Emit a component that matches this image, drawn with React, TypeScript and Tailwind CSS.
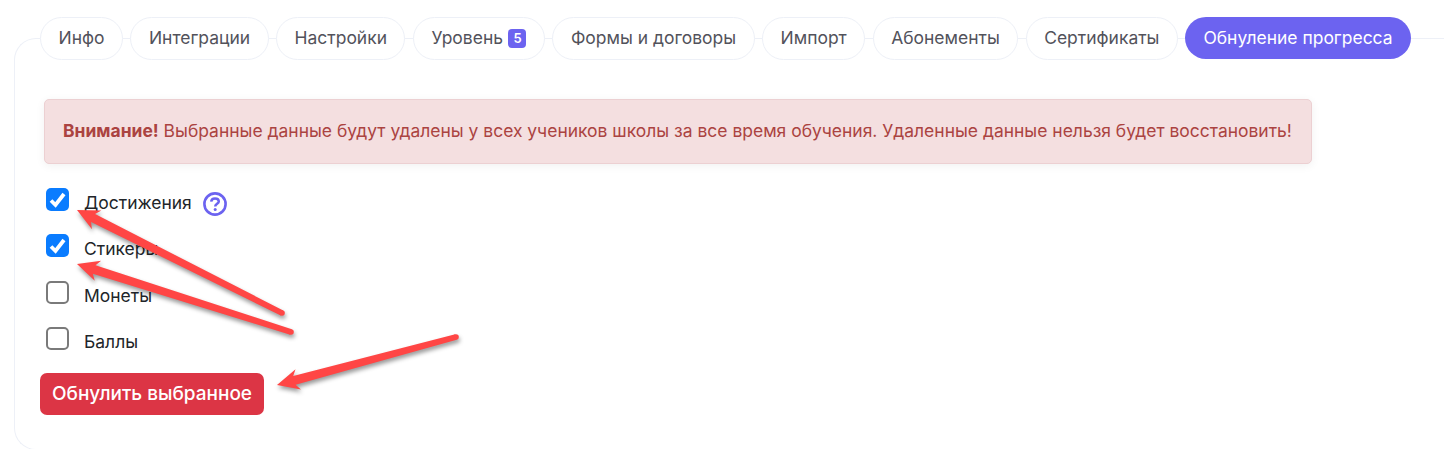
const tabs = ["Инфо", "Интеграции", "Настройки", "Уровень", "Формы и договоры", "Импорт", "Абонементы", "Сертификаты"];
const checks = [
  { label: "Достижения", checked: true, help: true },
  { label: "Стикеры", checked: true },
  { label: "Монеты", checked: false },
  { label: "Баллы", checked: false },
];
const arrows = [
  { x1: 282, y1: 313, x2: 77, y2: 210 },
  { x1: 291, y1: 332, x2: 77, y2: 264 },
  { x1: 456, y1: 337, x2: 277, y2: 385 },
];

function Arrow({ x1, y1, x2, y2 }: { x1: number; y1: number; x2: number; y2: number }) {
  const a = Math.atan2(y1 - y2, x1 - x2);
  const len = Math.hypot(x1 - x2, y1 - y2);
  const p = (d: number, o: number) => {
    const x = x2 + Math.cos(a) * d - Math.sin(a) * o;
    const y = y2 + Math.sin(a) * d + Math.cos(a) * o;
    return `${x},${y}`;
  };
  return (
    <g fill="#ff4645">
      <polygon
        points={`${p(0, 0)} ${p(22, 10.5)} ${p(18, 4.5)} ${p(len, 2.8)} ${p(len, -2.8)} ${p(18, -4.5)} ${p(22, -10.5)}`}
      />
      <circle cx={x1} cy={y1} r="2.8" />
    </g>
  );
}

function Check({ checked }: { checked: boolean }) {
  return checked ? (
    <span className="flex h-[23px] w-[23px] shrink-0 items-center justify-center rounded-[5px] bg-[#0a7cff]">
      <svg viewBox="0 0 23 23" className="h-[23px] w-[23px]">
        <path d="M5 12.5 L9.5 17 L18 6" fill="none" stroke="#fff" strokeWidth="3.8" />
      </svg>
    </span>
  ) : (
    <span className="h-[23px] w-[23px] shrink-0 rounded-[5px] border-2 border-[#7a7a7a] bg-white" />
  );
}

export default function App() {
  return (
    <div className="relative h-[449px] w-[1444px] overflow-hidden bg-white font-['Inter',sans-serif] pt-[38px] pl-[14px]">
      <div className="h-[412px] rounded-l-[22px] border-y border-l border-[#edf0f7] pl-[25px]">
        <div className="-mt-[22px] flex items-start gap-[7.4px]">
          {tabs.map((t) => (
            <div key={t} className="flex h-[43px] items-center gap-[5.5px] rounded-full border border-[#edf0f7] bg-white px-[17.5px] text-[17.475px] text-[#52525b]">
              {t}
              {t === "Уровень" && (
                <span className="flex h-[19px] w-[18px] items-center justify-center rounded-[4px] bg-[#6c63f0] text-[13px] font-semibold text-white">5</span>
              )}
            </div>
          ))}
          <div className="flex h-[42px] items-center rounded-full bg-[#6c63f0] px-[18px] text-[17.475px] text-white">Обнуление прогресса</div>
        </div>

        <div className="mt-[39px] ml-[4px] flex h-[65px] w-[1268px] items-center rounded-[5px] border border-[#ecd0d2] bg-[#f4dfe0] pl-[18px] text-[17.475px] text-[#ab4341] shadow-[0_2px_10px_rgba(0,0,0,0.06)]">
          <span><b className="font-bold">Внимание!</b> Выбранные данные будут удалены у всех учеников школы за все время обучения. Удаленные данные нельзя будет восстановить!</span>
        </div>

        <div className="mt-[24px] ml-[6px] flex flex-col gap-[23.3px]">
          {checks.map((c) => (
            <label key={c.label} className="flex h-[23px] items-start">
              <Check checked={c.checked} />
              <span className="mt-[5px] ml-[15px] text-[17.475px] leading-[20px] text-[#212529]">{c.label}</span>
              {c.help && (
                <svg viewBox="0 0 24 24" className="ml-[11px] mt-[4px] h-[24px] w-[24px]" fill="none" stroke="#6c63f0">
                  <circle cx="12" cy="12" r="10.6" strokeWidth="2.6" />
                  <path d="M8.2 9.6 C8.4 7.4 10 6.4 12 6.4 C14.2 6.4 15.8 7.7 15.8 9.5 C15.8 11.6 12.2 12 12.2 14.4" strokeWidth="2.5" />
                  <circle cx="12.2" cy="17.6" r="1.5" fill="#6c63f0" stroke="none" />
                </svg>
              )}
            </label>
          ))}
        </div>

        <button className="mt-[23px] h-[42px] w-[224px] rounded-[7px] bg-[#dc3545] text-[19px] font-medium text-white">Обнулить выбранное</button>
      </div>

      <svg className="pointer-events-none absolute inset-0 h-[449px] w-[1444px] drop-shadow-[1px_3px_2px_rgba(0,0,0,0.4)]" viewBox="0 0 1444 449">
        {arrows.map((a, i) => (
          <Arrow key={i} {...a} />
        ))}
      </svg>
    </div>
  );
}
